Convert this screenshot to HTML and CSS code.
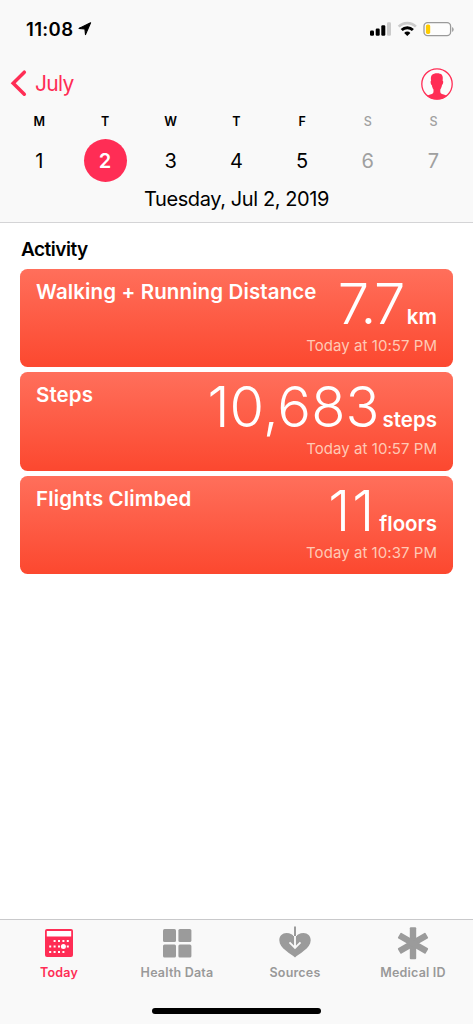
FILE: index.html
```html
<!DOCTYPE html>
<html lang="en">
<head>
<meta charset="utf-8">
<title>Health</title>
<link rel="stylesheet" href="styles.css">
</head>
<body>
<div class="screen">
  <header class="header">
    <div class="status">
      <span class="time">11:08</span>
      <svg class="location" width="14" height="14" viewBox="0 0 14 14"><path d="M12.6.8 7.5 12.6 6.9 7 1 6.400Z" fill="#000" stroke="#000" stroke-width="1.100" stroke-linejoin="round"/></svg>
      <svg class="indicators" width="86" height="18" viewBox="0 0 86 18">
        <rect x="1" y="10.5" width="4" height="5.3" rx="1.2"/>
        <rect x="6.7" y="8.5" width="4" height="7.3" rx="1.2"/>
        <rect x="12.3" y="5.3" width="4" height="10.5" rx="1.2"/>
        <rect x="18" y="2.3" width="4" height="13.5" rx="1.2" fill="#cbcbcb"/>
        <path d="M29.7 6.600a12.300 12.300 0 0 1 17.200 0" fill="none" stroke="#cbcbcb" stroke-width="2.700"/>
        <path d="M32.700 10a8 8 0 0 1 11.200 0" fill="none" stroke="#000" stroke-width="2.900"/>
        <path d="M35.200 12.900a4.300 4.300 0 0 1 6.200 0L38.300 15.900Z"/>
        <rect x="55" y="2.7" width="26.6" height="13" rx="3.6" fill="#fdfdfd" stroke="#9a9a9a" stroke-width="1.3"/>
        <rect x="56.900" y="4.5" width="4.3" height="9.4" rx="1.6" fill="#fc0"/>
        <path d="M83.100 7v5q1.5-.7 1.5-2.500T83.100 7Z" fill="#999"/>
      </svg>
    </div>
    <nav class="nav">
      <svg class="chevron" width="18" height="30" viewBox="0 0 18 30"><path d="M15.300 4.200 4.200 15.200 15.300 26.200" fill="none" stroke="#ff2d55" stroke-width="3.500" stroke-linecap="round"/></svg>
      <span class="month">July</span>
      <svg class="avatar" width="32" height="32" viewBox="0 0 32 32">
        <circle cx="16" cy="16" r="15.200" fill="#fcfcfc" stroke="#ff2d55" stroke-width="1.300"/>
        <path d="M5.700 27.800c1.600-1 5.500-1.600 6.300-2.600.6-.7.600-2.700.4-3.900-.8-.9-1.400-2.700-1.600-4.200-.8-.2-1.300-2.300-1.200-3.600.1-.6.300-.7.500-.7-.4-2.500-.3-4.600.8-5.900 2-2.300 8.300-2.200 9.900-.2 1.200 1.400 1.100 3.700.8 6.100.4 0 .6.500.6 1 .1 1.500-.5 3-1.200 3.300-.2 1.500-.8 3.300-1.600 4.200-.2 1.200-.2 3.200.4 3.900.9 1 4.900 1.600 6.500 2.600C23.500 30.200 20 31.400 16 31.400s-7.500-1.200-10.300-3.600Z" fill="#ff2d55"/>
      </svg>
    </nav>
    <div class="week names">
      <span>M</span><span>T</span><span>W</span><span>T</span><span>F</span><span class="off">S</span><span class="off">S</span>
    </div>
    <div class="week days">
      <span>1</span><span class="selected">2</span><span>3</span><span>4</span><span>5</span><span class="off">6</span><span class="off">7</span>
    </div>
    <div class="date"><span>Tuesday, Jul 2, 2019</span></div>
  </header>

  <main class="content">
    <h2 class="section">Activity</h2>
    <article class="card">
      <h3 class="title">Walking + Running Distance</h3>
      <div class="reading"><span class="value distance">7.7</span><span class="unit">km</span></div>
      <p class="when">Today at 10:57 PM</p>
    </article>
    <article class="card">
      <h3 class="title">Steps</h3>
      <div class="reading"><span class="value steps">10,683</span><span class="unit">steps</span></div>
      <p class="when">Today at 10:57 PM</p>
    </article>
    <article class="card">
      <h3 class="title">Flights Climbed</h3>
      <div class="reading"><span class="value floors">11</span><span class="unit">floors</span></div>
      <p class="when">Today at 10:37 PM</p>
    </article>
  </main>

  <footer class="tabbar">
    <div class="tabs">
      <div class="tab active">
        <svg width="34" height="34" viewBox="0 0 34 34">
          <rect x="3" y="3" width="28" height="28" rx="2" fill="#ff2d55"/>
          <rect x="4.800" y="5" width="24.400" height="5.500" fill="#fff"/>
          <g fill="#fff"><path d="M11.600 14h2v2h-2zM16 14h2v2h-2zM20.400 14h2v2h-2zM24.800 14h2v2h-2zM7.200 19.500h2v2h-2zM11.600 19.500h2v2h-2zM16 19.500h2v2h-2zM24.800 19.500h2v2h-2zM7.200 25h2v2h-2zM11.600 25h2v2h-2zM16 25h2v2h-2zM20.400 25h2v2h-2z"/><circle cx="21.400" cy="20.500" r="2.500"/></g>
        </svg>
        <span>Today</span>
      </div>
      <div class="tab">
        <svg width="34" height="34" viewBox="0 0 34 34"><g fill="#9b9b9b"><rect x="3" y="3" width="13" height="13" rx="1.500"/><rect x="18.400" y="3" width="13" height="13" rx="1.500"/><rect x="3" y="18.400" width="13" height="13" rx="1.500"/><rect x="18.400" y="18.400" width="13" height="13" rx="1.500"/></g></svg>
        <span>Health Data</span>
      </div>
      <div class="tab">
        <svg width="34" height="34" viewBox="0 0 34 34">
          <path d="M17 31.500C13.500 28 1.300 22.500 1.300 14.300 1.300 10 4.400 7 8.500 7c3.700 0 6.700 1.700 8.500 4.400C18.800 8.700 21.800 7 25.500 7c4.100 0 7.200 3 7.200 7.300C32.700 22.500 20.500 28 17 31.500Z" fill="#9b9b9b"/>
          <path d="M17 7v14M11.500 16.300l5.500 5.500 5.500-5.500" fill="none" stroke="#f9f9f9" stroke-width="1.900"/>
          <path d="M17 6v4" stroke="#f9f9f9" stroke-width="4"/>
          <path d="M17 .5v9.500" stroke="#9b9b9b" stroke-width="2"/>
        </svg>
        <span>Sources</span>
      </div>
      <div class="tab">
        <svg width="34" height="34" viewBox="0 0 34 34"><g fill="#9b9b9b"><rect x="13.800" y="1.300" width="6.400" height="32" rx="1"/><rect x="13.800" y="1.300" width="6.400" height="32" rx="1" transform="rotate(60 17 17.300)"/><rect x="13.800" y="1.300" width="6.400" height="32" rx="1" transform="rotate(-60 17 17.300)"/></g></svg>
        <span>Medical ID</span>
      </div>
    </div>
    <div class="home"></div>
  </footer>
</div>
</body>
</html>
```
FILE: styles.css
```css
* { box-sizing: border-box; }
body { margin: 0; font-family: Inter, "Liberation Sans", sans-serif; color: #000; background: #fff; }
h2, h3, p { margin: 0; }
svg { display: block; flex: none; }
.screen { width: 473px; height: 1024px; display: flex; flex-direction: column; overflow: hidden; }

.header { height: 223px; flex: none; background: #f9f9f9; border-bottom: 1px solid #d4d4d6; }
.status { height: 58px; padding: 0 18px 0 26px; display: flex; align-items: center; }
.time { font-size: 18.500px; font-weight: 600; letter-spacing: .35px; }
.location { margin-left: 4.500px; }
.indicators { margin-left: auto; }
.nav { height: 50px; padding: 1px 20px 0 9px; display: flex; align-items: center; }
.chevron { margin-top: -1px; }
.month { margin-left: 8px; font-size: 21px; color: #ff2d55; letter-spacing: -.7px; }
.avatar { margin-left: auto; }
.week { display: grid; grid-template-columns: repeat(7, 65.700px); padding-left: 6.500px; justify-items: center; align-items: center; }
.names { height: 27px; font-size: 12.500px; font-weight: 600; }
.days { height: 51px; font-size: 20px; }
.off { color: #a0a0a0; }
.names .off { font-weight: 500; }
.selected { width: 43px; height: 43px; line-height: 44px; border-radius: 50%; text-align: center; background: #ff2d55; color: #fff; font-weight: 600; }
.date { height: 26px; line-height: 26px; text-align: center; font-size: 20px; letter-spacing: -.4px; }

.content { flex: 1; padding: 15px 20.500px 0 20px; }
.section { height: 23px; line-height: 23px; margin-bottom: 7.500px; padding-left: 1px; font-size: 19px; font-weight: 600; letter-spacing: -.5px; }
.card { height: 98.500px; margin-bottom: 5px; padding: 10px 15.500px 0 16px; border-radius: 7.500px; color: #fff; background: linear-gradient(#ff6f5b, #fc482f); display: grid; grid-template-columns: auto 1fr; grid-template-rows: 56px 22px; }
.title { font-size: 20.500px; line-height: 25px; font-weight: 600; letter-spacing: .12px; white-space: nowrap; }
.reading { display: flex; justify-content: flex-end; align-items: baseline; line-height: 51px; }
.value { font-size: 56px; font-weight: 300; }
.distance { letter-spacing: -1.500px; }
.steps { letter-spacing: .1px; }
.floors { letter-spacing: 2px; }
.unit { margin-left: 3px; font-size: 20.500px; font-weight: 600; }
.when { grid-column: 1 / 3; text-align: right; font-size: 15px; line-height: 22px; letter-spacing: .05px; color: #ffc9b5; }

.tabbar { height: 105px; flex: none; border-top: 1px solid #c9c9cb; background: #f9f9f9; display: flex; flex-direction: column; align-items: center; justify-content: space-between; padding: 6px 0 10px; }
.tabs { width: 473px; display: grid; grid-template-columns: repeat(4, 118px); }
.tab { display: flex; flex-direction: column; align-items: center; color: #999; font-size: 12.500px; line-height: 18px; font-weight: 600; letter-spacing: .2px; gap: 4px; }
.active { color: #ff2d55; }
.home { width: 169px; height: 6px; border-radius: 3px; background: #000; }
```
